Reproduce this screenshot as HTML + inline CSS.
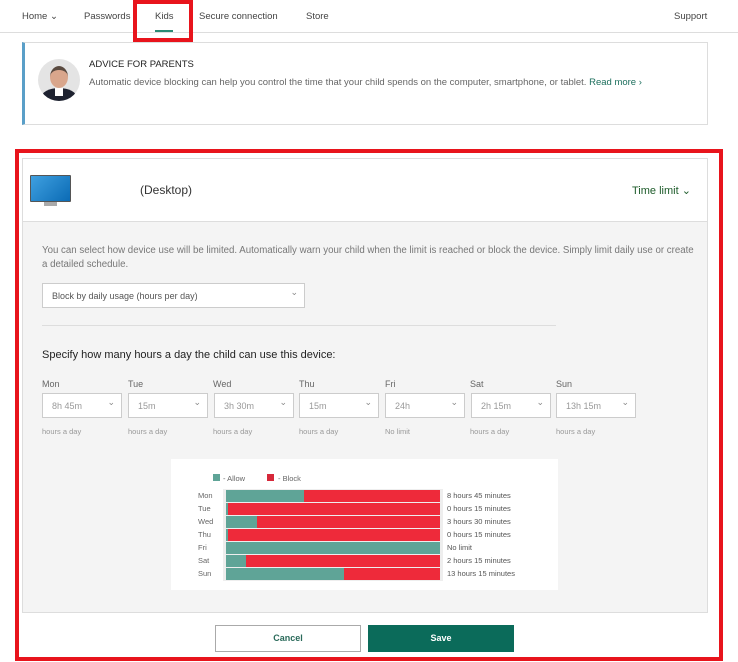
<!DOCTYPE html>
<html><head><meta charset="utf-8"><style>
*{box-sizing:border-box;margin:0;padding:0}
body{width:738px;height:662px;background:#fff;font-family:"Liberation Sans",sans-serif;position:relative;overflow:hidden;color:#333}
.a{position:absolute}
.nav{font-size:9.5px;color:#444;top:11px}
.t{white-space:nowrap}
.sel{position:absolute;background:#fff;border:1px solid #ccc;height:25px;font-size:9px;color:#999;padding:7px 0 0 9px}
.sel:after{content:"⌄";position:absolute;right:6px;top:3px;font-size:9px;color:#888}
.day{font-size:9px;color:#666;top:379px}
.sub{font-size:7.5px;color:#999;top:427px}
.bar{position:absolute;left:226px;width:214px;height:12px;background:#ee2a3a}
.bar i{display:block;height:100%;background:#5fa497}
.bl{position:absolute;left:198px;font-size:7.5px;color:#666}
.bt{position:absolute;left:447px;font-size:7.5px;color:#555}
</style></head><body>
<div class="a nav t" style="left:22px">Home ⌄</div>
<div class="a nav t" style="left:84px">Passwords</div>
<div class="a nav t" style="left:155px">Kids</div>
<div class="a" style="left:155px;top:30px;width:18px;height:2px;background:#2a8a74"></div>
<div class="a nav t" style="left:199px">Secure connection</div>
<div class="a nav t" style="left:306px">Store</div>
<div class="a nav t" style="left:674px">Support</div>
<div class="a" style="left:0;top:32px;width:738px;height:1px;background:#ddd"></div>
<div class="a" style="left:133px;top:0;width:60px;height:42px;border:4px solid #e8141c"></div>

<div class="a" style="left:22px;top:42px;width:686px;height:83px;border:1px solid #ddd;border-left:3px solid #5a9fc8;background:#fff"></div>
<div class="a" style="left:38px;top:59px;width:42px;height:42px;border-radius:50%;overflow:hidden;background:#e4e4e4">
  <div class="a" style="left:12px;top:7px;width:18px;height:22px;border-radius:50%;background:#d9a68c;border-top:4px solid #5a4a40"></div>
  <div class="a" style="left:3px;top:29px;width:36px;height:20px;border-radius:50% 50% 0 0;background:#1e2230"></div>
  <div class="a" style="left:17px;top:29px;width:8px;height:8px;background:#fff"></div>
</div>
<div class="a t" style="left:89px;top:59px;font-size:9.5px;color:#222">ADVICE FOR PARENTS</div>
<div class="a t" style="left:89px;top:77px;font-size:9.5px;color:#666">Automatic device blocking can help you control the time that your child spends on the computer, smartphone, or tablet. <span style="color:#1d6f5d">Read more ›</span></div>

<div class="a" style="left:15px;top:149px;width:708px;height:512px;border:4px solid #e8141c"></div>
<div class="a" style="left:22px;top:158px;width:686px;height:455px;border:1px solid #ddd;background:#f4f4f4"></div>
<div class="a" style="left:23px;top:159px;width:684px;height:63px;background:#fff;border-bottom:1px solid #ddd"></div>
<div class="a" style="left:30px;top:175px;width:41px;height:27px;background:linear-gradient(135deg,#3fa0e0,#0b6bb5);border:1.5px solid #555;border-radius:1px"></div>
<div class="a" style="left:44px;top:202px;width:13px;height:4px;background:#aaa"></div>
<div class="a t" style="left:140px;top:183px;font-size:12px;color:#333">(Desktop)</div>
<div class="a t" style="left:632px;top:184px;font-size:11px;color:#1d5b2a">Time limit ⌄</div>

<div class="a t" style="left:42px;top:244px;font-size:9.7px;line-height:13.5px;color:#777">You can select how device use will be limited. Automatically warn your child when the limit is reached or block the device. Simply limit daily use or create<br>a detailed schedule.</div>
<div class="sel" style="left:42px;top:283px;width:263px;color:#555">Block by daily usage (hours per day)</div>
<div class="a" style="left:42px;top:325px;width:514px;height:1px;background:#ddd"></div>
<div class="a t" style="left:42px;top:349px;font-size:11px;color:#222">Specify how many hours a day the child can use this device:</div>

<div class="a day" style="left:42px">Mon</div><div class="a day" style="left:128px">Tue</div><div class="a day" style="left:213px">Wed</div><div class="a day" style="left:299px">Thu</div><div class="a day" style="left:385px">Fri</div><div class="a day" style="left:470px">Sat</div><div class="a day" style="left:556px">Sun</div>
<div class="sel" style="left:42px;top:393px;width:80px">8h 45m</div>
<div class="sel" style="left:128px;top:393px;width:80px">15m</div>
<div class="sel" style="left:214px;top:393px;width:80px">3h 30m</div>
<div class="sel" style="left:299px;top:393px;width:80px">15m</div>
<div class="sel" style="left:385px;top:393px;width:80px">24h</div>
<div class="sel" style="left:471px;top:393px;width:80px">2h 15m</div>
<div class="sel" style="left:556px;top:393px;width:80px">13h 15m</div>
<div class="a sub t" style="left:42px">hours a day</div><div class="a sub t" style="left:128px">hours a day</div><div class="a sub t" style="left:213px">hours a day</div><div class="a sub t" style="left:299px">hours a day</div><div class="a sub t" style="left:385px">No limit</div><div class="a sub t" style="left:470px">hours a day</div><div class="a sub t" style="left:556px">hours a day</div>

<div class="a" style="left:171px;top:459px;width:387px;height:131px;background:#fff"></div>
<div class="a" style="left:213px;top:474px;width:7px;height:7px;background:#5fa497"></div>
<div class="a t" style="left:223px;top:474px;font-size:7.5px;color:#666">- Allow</div>
<div class="a" style="left:267px;top:474px;width:7px;height:7px;background:#d6283a"></div>
<div class="a t" style="left:278px;top:474px;font-size:7.5px;color:#666">- Block</div>
<div class="a" style="left:223px;top:489px;width:220px;height:92px;background:#eee"></div>
<div class="bar" style="top:490px"><i style="width:36.5%"></i></div>
<div class="bar" style="top:503px"><i style="width:1%"></i></div>
<div class="bar" style="top:516px"><i style="width:14.6%"></i></div>
<div class="bar" style="top:529px"><i style="width:1%"></i></div>
<div class="bar" style="top:542px"><i style="width:100%"></i></div>
<div class="bar" style="top:555px"><i style="width:9.4%"></i></div>
<div class="bar" style="top:568px"><i style="width:55.2%"></i></div>
<div class="bl" style="top:491px">Mon</div><div class="bl" style="top:504px">Tue</div><div class="bl" style="top:517px">Wed</div><div class="bl" style="top:530px">Thu</div><div class="bl" style="top:543px">Fri</div><div class="bl" style="top:556px">Sat</div><div class="bl" style="top:569px">Sun</div>
<div class="bt" style="top:491px">8 hours 45 minutes</div><div class="bt" style="top:504px">0 hours 15 minutes</div><div class="bt" style="top:517px">3 hours 30 minutes</div><div class="bt" style="top:530px">0 hours 15 minutes</div><div class="bt" style="top:543px">No limit</div><div class="bt" style="top:556px">2 hours 15 minutes</div><div class="bt" style="top:569px">13 hours 15 minutes</div>

<div class="a" style="left:215px;top:625px;width:146px;height:27px;border:1px solid #aaa;background:#fff;font-size:9px;color:#2a6a5a;text-align:center;line-height:25px;font-weight:bold">Cancel</div>
<div class="a" style="left:368px;top:625px;width:146px;height:27px;background:#0b6b5a;font-size:9px;color:#fff;text-align:center;line-height:27px;font-weight:bold">Save</div>
</body></html>
